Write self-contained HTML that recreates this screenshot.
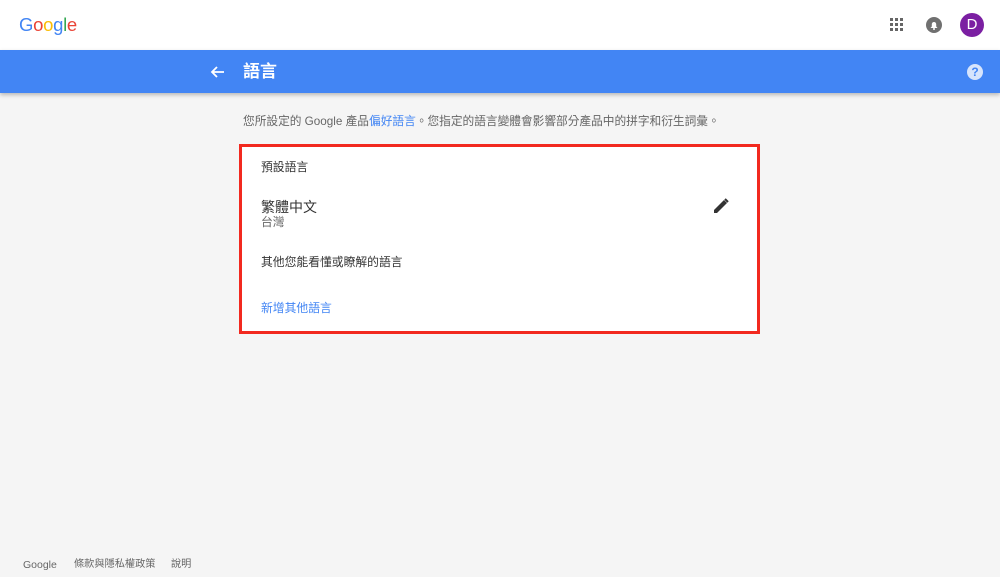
<!DOCTYPE html><html><head><meta charset="utf-8"><style>
*{margin:0;padding:0;box-sizing:border-box}
body{width:1000px;height:577px;background:#f5f5f5;font-family:"Liberation Sans","Noto Sans CJK TC",sans-serif;position:relative;overflow:hidden;color:#333}
.top{position:absolute;left:0;top:0;width:1000px;height:50px;background:#fff}
.logo{position:absolute;left:19px;top:14px;font-size:18.5px;letter-spacing:-0.3px;line-height:1.2}
.bar{position:absolute;left:0;top:50px;width:1000px;height:43px;background:#4285f4;box-shadow:0 2px 4px rgba(0,0,0,.25)}
.t{position:absolute;font-size:13px;white-space:nowrap;line-height:1.2}
.card{position:absolute;left:239px;top:144px;width:521px;height:190px;background:#fff;border:3px solid #f2291f}
</style></head><body>
<div class="top">
<div class="logo"><span style="color:#4285f4">G</span><span style="color:#ea4335">o</span><span style="color:#fbbc05">o</span><span style="color:#4285f4">g</span><span style="color:#34a853">l</span><span style="color:#ea4335">e</span></div>
<svg style="position:absolute;left:890px;top:18px" width="14" height="14" fill="#666"><g><rect x="0" y="0" width="3" height="3"/><rect x="5" y="0" width="3" height="3"/><rect x="10" y="0" width="3" height="3"/><rect x="0" y="5" width="3" height="3"/><rect x="5" y="5" width="3" height="3"/><rect x="10" y="5" width="3" height="3"/><rect x="0" y="10" width="3" height="3"/><rect x="5" y="10" width="3" height="3"/><rect x="10" y="10" width="3" height="3"/></g></svg>
<svg style="position:absolute;left:926px;top:17px" width="16" height="16"><circle cx="8" cy="8" r="8" fill="#707070"/><path d="M4.5 11h7l-1.3-1.5V7.2a2.2 2.2 0 0 0-4.4 0v2.3z" fill="#fff"/><circle cx="8" cy="12" r="1" fill="#fff"/></svg>
<div style="position:absolute;left:960px;top:13px;width:24px;height:24px;border-radius:50%;background:#7b1fa2;color:#fff;font-size:15px;text-align:center;line-height:24px">D</div>
</div>
<div class="bar">
<svg style="position:absolute;left:209px;top:14px" width="16" height="16"><path d="M15 8H3M8 3L3 8l5 5" stroke="#fff" stroke-width="1.8" fill="none"/></svg>
<div class="t" style="left:243px;top:12px;color:#fff;font-size:17px;font-weight:bold">語言</div>
<div style="position:absolute;left:967px;top:14px;width:16px;height:16px;border-radius:50%;background:#d6e4fc;color:#4285f4;font-size:12px;font-weight:bold;text-align:center;line-height:16px">?</div>
</div>
<div class="t" style="left:243px;top:115px;color:#666;font-size:11.7px">您所設定的 Google 產品<span style="color:#4285f4">偏好語言</span>。您指定的語言變體會影響部分產品中的拼字和衍生詞彙。</div>
<div class="card">
<div class="t" style="left:19px;top:13px;font-size:11.8px;color:#333">預設語言</div>
<div class="t" style="left:19px;top:52px;font-size:14px;color:#333">繁體中文</div>
<div class="t" style="left:19px;top:68px;font-size:11.8px;color:#666">台灣</div>
<svg style="position:absolute;left:471px;top:51px" width="16" height="16"><path d="M1 15v-3L11 2l3 3L4 15z" fill="#333"/><path d="M12 1l3 3" stroke="#333" stroke-width="2"/></svg>
<div class="t" style="left:19px;top:108px;font-size:11.8px;color:#333">其他您能看懂或瞭解的語言</div>
<div class="t" style="left:19px;top:154px;font-size:11.8px;color:#4285f4">新增其他語言</div>
</div>
<div class="t" style="left:23px;top:559px;font-size:10.5px;color:#666">Google</div>
<div class="t" style="left:74px;top:559px;font-size:10.2px;color:#666">條款與隱私權政策</div>
<div class="t" style="left:171px;top:559px;font-size:10.2px;color:#666">說明</div>
</body></html>
